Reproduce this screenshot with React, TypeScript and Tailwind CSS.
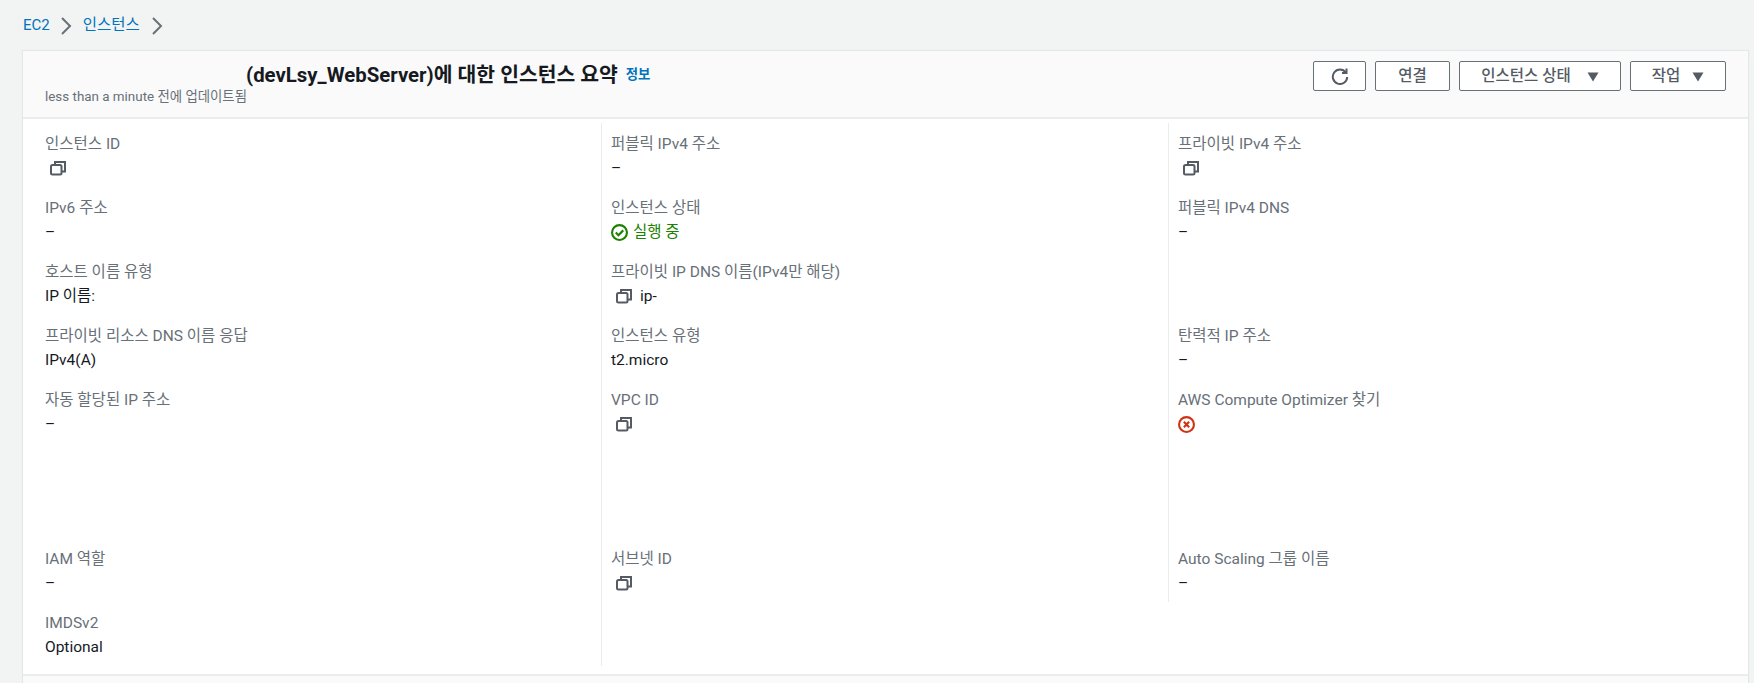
import { ReactNode } from 'react';

function CopyIcon() {
  return (
    <svg width="16" height="16" viewBox="0 0 16 16" fill="none" stroke="#545b64" strokeWidth="2" className="block">
      <rect x="1" y="5" width="10.5" height="9.5" rx="1.5" />
      <path d="M5 4.5V2h10v9.5h-3" />
    </svg>
  );
}

function Chevron() {
  return (
    <svg width="12" height="20" viewBox="0 0 12 20" fill="none" stroke="#687078" strokeWidth="2">
      <path d="M2 2l8 8-8 8" />
    </svg>
  );
}

function Caret() {
  return (
    <svg width="12" height="10" viewBox="0 0 12 10" fill="#545b64">
      <path d="M0.5 0.5h11L6 9.5z" />
    </svg>
  );
}

function Field({ label, children }: { label?: string; children?: ReactNode }) {
  return (
    <div>
      {label && <div className="text-[15.5px] leading-5 text-[#687078]">{label}</div>}
      {children && <div className="mt-[4px] flex h-5 items-center text-[15.5px] leading-5 text-[#16191f]">{children}</div>}
    </div>
  );
}

function Cell({ border = true, tall = false, children }: { border?: boolean; tall?: boolean; children?: ReactNode }) {
  return (
    <div className={`${tall ? 'h-[159px]' : 'h-[64px]'} pt-[11px] ${border ? 'border-l border-[#eaeded] pl-[9px]' : 'pl-[22px]'}`}>
      {children}
    </div>
  );
}

export default function App() {
  return (
    <div className="h-[683px] overflow-hidden bg-[#f2f3f3] font-['Roboto','Noto_Sans_CJK_KR',sans-serif]">
      {/* Breadcrumb */}
      <div className="flex h-[51px] items-center pl-[23px]">
        <span className="text-[15px] text-[#0073bb]">EC2</span>
        <span className="ml-[10px] mr-[11px] flex"><Chevron /></span>
        <span className="text-[15.5px] text-[#0073bb]">인스턴스</span>
        <span className="ml-[11px] flex"><Chevron /></span>
      </div>

      {/* Summary card */}
      <div className="ml-[23px] mr-[6px] h-[640px] bg-white shadow-[0_0_1px_1px_#e4e7e7]">
        <div className="flex h-[68px] justify-between border-b-2 border-[#eaeded] bg-[#fafafa] pl-[22px] pr-[22px]">
          <div>
            <div className="mt-[12px] flex h-6 items-center pl-[201px]">
              <h1 className="text-[20.4px] font-bold leading-6 text-[#16191f]">(devLsy_WebServer)에 대한 인스턴스 요약</h1>
              <span className="ml-2 text-[13.4px] font-bold text-[#0073bb]">정보</span>
            </div>
            <div className="text-[13.4px] leading-5 text-[#687078]">less than a minute 전에 업데이트됨</div>
          </div>
          <div className="mt-[10px] flex h-[30px] gap-[9px]">
            <button className="flex w-[53px] items-center justify-center rounded-[2px] border border-[#687078] bg-white">
              <svg width="18" height="18" viewBox="0 0 18 18" fill="none" stroke="#545b64" strokeWidth="2" className="-mt-[1px]">
                <path d="M14.8 5.5A7.2 7.2 0 1 0 16.2 10" />
                <path d="M15.5 1.5v4.5H11" />
              </svg>
            </button>
            <button className="w-[75px] rounded-[2px] border border-[#687078] bg-white pt-[2px] text-[15.5px] font-medium text-[#545b64]">연결</button>
            <button className="flex w-[162px] items-center justify-center gap-4 rounded-[2px] border border-[#687078] bg-white pt-[2px] text-[15.5px] font-medium text-[#545b64]">
              인스턴스 상태 <Caret />
            </button>
            <button className="flex w-[96px] items-center justify-center gap-3 rounded-[2px] border border-[#687078] bg-white pt-[2px] text-[15.5px] font-medium text-[#545b64]">
              작업 <Caret />
            </button>
          </div>
        </div>

        <div className="grid grid-cols-[578px_567px_1fr] pt-[4px]">
          <Cell border={false}><Field label="인스턴스 ID"><span className="pl-[5px]"><CopyIcon /></span></Field></Cell>
          <Cell><Field label="퍼블릭 IPv4 주소">–</Field></Cell>
          <Cell><Field label="프라이빗 IPv4 주소"><span className="pl-[5px]"><CopyIcon /></span></Field></Cell>

          <Cell border={false}><Field label="IPv6 주소">–</Field></Cell>
          <Cell>
            <Field label="인스턴스 상태">
              <svg width="17" height="17" viewBox="0 0 16 16" fill="none" stroke="#1d8102" strokeWidth="2" className="mr-[5px]">
                <circle cx="8" cy="8" r="7" />
                <path d="M4.5 8l2.5 2.5 4.5-4.5" />
              </svg>
              <span className="text-[#1d8102]">실행 중</span>
            </Field>
          </Cell>
          <Cell><Field label="퍼블릭 IPv4 DNS">–</Field></Cell>

          <Cell border={false}><Field label="호스트 이름 유형">IP 이름:</Field></Cell>
          <Cell>
            <Field label="프라이빗 IP DNS 이름(IPv4만 해당)">
              <span className="pl-[5px] pr-[8px]"><CopyIcon /></span>ip-
            </Field>
          </Cell>
          <Cell />

          <Cell border={false}><Field label="프라이빗 리소스 DNS 이름 응답">IPv4(A)</Field></Cell>
          <Cell><Field label="인스턴스 유형">t2.micro</Field></Cell>
          <Cell><Field label="탄력적 IP 주소">–</Field></Cell>

          <Cell border={false} tall><Field label="자동 할당된 IP 주소">–</Field></Cell>
          <Cell tall><Field label="VPC ID"><span className="pl-[5px]"><CopyIcon /></span></Field></Cell>
          <Cell tall>
            <Field label="AWS Compute Optimizer 찾기">
              <svg width="17" height="17" viewBox="0 0 16 16" fill="none" stroke="#d13212" strokeWidth="2">
                <circle cx="8" cy="8" r="7" />
                <path d="M5.5 5.5l5 5M10.5 5.5l-5 5" />
              </svg>
            </Field>
          </Cell>

          <Cell border={false}><Field label="IAM 역할">–</Field></Cell>
          <Cell><Field label="서브넷 ID"><span className="pl-[5px]"><CopyIcon /></span></Field></Cell>
          <Cell><Field label="Auto Scaling 그룹 이름">–</Field></Cell>

          <Cell border={false}><Field label="IMDSv2">Optional</Field></Cell>
          <Cell />
        </div>

        <div className="mt-[8px] h-[20px] border-t-2 border-[#eaeded] bg-[#fafafa]" />
      </div>
    </div>
  );
}
